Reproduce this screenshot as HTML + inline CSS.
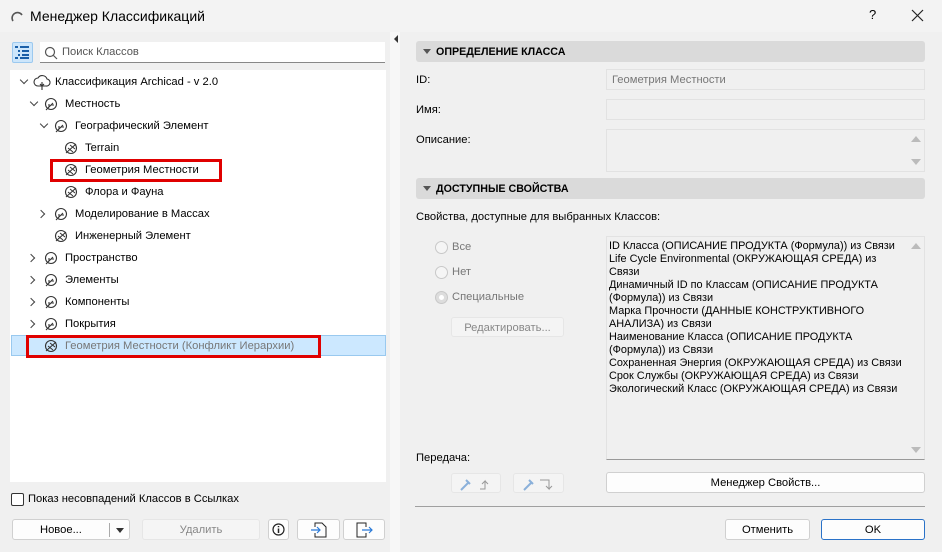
<!DOCTYPE html>
<html><head><meta charset="utf-8"><style>
*{box-sizing:border-box;margin:0;padding:0}
body{width:942px;height:552px;background:#f0f0f0;font-family:"Liberation Sans","DejaVu Sans",sans-serif;font-size:11.2px;color:#000;position:relative;overflow:hidden}
.a{position:absolute}
.t{white-space:nowrap}
.btn{position:absolute;background:#fdfdfd;border:1px solid #d0d0d0;border-radius:3px;text-align:center;line-height:21px}
.fld{position:absolute;background:#f0f0f0;border:1px solid #e2e2e2}
.hdr{position:absolute;left:416px;width:509px;height:21px;background:#dadada;border-radius:3px;font-weight:bold;font-size:10.7px;line-height:22px;padding-left:20px}
.hdr:before{content:"";position:absolute;left:7px;top:8px;border-left:4px solid transparent;border-right:4px solid transparent;border-top:5px solid #555}
.row{position:absolute;height:22px;line-height:23px;white-space:nowrap}
.chev{position:absolute;width:6px;height:6px;border-right:1.5px solid #444;border-bottom:1.5px solid #444}
.dn{transform:rotate(45deg)}
.rt{transform:rotate(-45deg)}
.radio{position:absolute;width:13px;height:13px;border:1px solid #c8c8c8;border-radius:50%;background:#f5f5f5}
.red{position:absolute;border:3px solid #e00000}
.sc{position:absolute;width:0;height:0;border-left:5px solid transparent;border-right:5px solid transparent}
</style></head><body>
<div class="a" style="left:0;top:0;width:942px;height:32px;background:#f3f3f3"></div>
<svg class="a" style="left:10px;top:9px" width="14" height="14"><path d="M3 12 A5 5 0 0 1 12 6" stroke="#555" stroke-width="1.6" fill="none"/></svg>
<div class="a t" style="left:30px;top:8px;font-size:14px">Менеджер Классификаций</div>
<div class="a t" style="left:869px;top:7px;font-size:13px">?</div>
<svg class="a" style="left:911px;top:9px" width="13" height="13"><path d="M1 1L12 12M12 1L1 12" stroke="#222" stroke-width="1.2"/></svg>
<div class="a" style="left:390px;top:32px;width:10px;height:520px;background:#f7f7f7"></div>
<div class="a" style="left:394px;top:35px;border-top:4px solid transparent;border-bottom:4px solid transparent;border-right:4px solid #333"></div>
<div class="a" style="left:12px;top:42px;width:21px;height:21px;background:#cde6fb;border:1px solid #9cc9ef;border-radius:2px"></div>
<svg class="a" style="left:15px;top:46px" width="15" height="13"><g fill="#1a5fa8"><rect x="0" y="0" width="3" height="2"/><rect x="5" y="0" width="9" height="2"/><rect x="3" y="4" width="2" height="2"/><rect x="7" y="4" width="7" height="2"/><rect x="3" y="8" width="2" height="2"/><rect x="7" y="8" width="7" height="2"/><rect x="0" y="11" width="3" height="2"/><rect x="5" y="11" width="9" height="2"/></g></svg>
<div class="a" style="left:40px;top:42px;width:345px;height:21px;background:#fff;border-bottom:1px solid #888"></div>
<svg class="a" style="left:44px;top:46px" width="14" height="14"><circle cx="6" cy="6" r="4.5" stroke="#555" fill="none" stroke-width="1.2"/><path d="M9.5 9.5L13 13" stroke="#555" stroke-width="1.2"/></svg>
<div class="a t" style="left:62px;top:46px;color:#555">Поиск Классов</div>
<div class="a" style="left:10px;top:70px;width:376px;height:412px;background:#fff"></div>
<div class="a" style="left:11px;top:335px;width:375px;height:21px;background:#cce8ff;border:1px solid #99c9ef"></div>

<svg width="0" height="0" style="position:absolute"><defs>
<g id="leaf"><circle cx="7" cy="7" r="5.5" stroke="#333" fill="none" stroke-width="1.1"/><path d="M2 13L9 6M5 10L5 7M7 8L10 8" stroke="#333" stroke-width="1.1" fill="none"/></g>
<g id="leaf2"><circle cx="7" cy="7" r="5.5" stroke="#333" fill="none" stroke-width="1.1"/><path d="M2 12L12 3M4 7L9 11M6 4L11 8" stroke="#333" stroke-width="1" fill="none"/></g>
</defs></svg>

<div class="chev dn" style="left:21px;top:77px"></div>
<svg class="a" style="left:33px;top:74px" width="18" height="17"><path d="M5 12a4 4 0 0 1 0-8a5 5 0 0 1 9 1a3.5 3.5 0 0 1-1 7z M9 8v8M7 10l2 2 2-2" stroke="#333" fill="none" stroke-width="1.1"/></svg>
<div class="row" style="left:55px;top:71px">Классификация Archicad - v 2.0</div>
<div class="chev dn" style="left:31px;top:99px"></div>
<svg class="a" style="left:44px;top:97px" width="15" height="15"><use href="#leaf"/></svg>
<div class="row" style="left:65px;top:93px">Местность</div>
<div class="chev dn" style="left:41px;top:121px"></div>
<svg class="a" style="left:54px;top:119px" width="15" height="15"><use href="#leaf"/></svg>
<div class="row" style="left:75px;top:115px">Географический Элемент</div>
<svg class="a" style="left:64px;top:141px" width="15" height="15"><use href="#leaf2"/></svg>
<div class="row" style="left:85px;top:137px">Terrain</div>
<svg class="a" style="left:64px;top:163px" width="15" height="15"><use href="#leaf2"/></svg>
<div class="row" style="left:85px;top:159px">Геометрия Местности</div>
<svg class="a" style="left:64px;top:185px" width="15" height="15"><use href="#leaf2"/></svg>
<div class="row" style="left:85px;top:181px">Флора и Фауна</div>
<div class="chev rt" style="left:38px;top:211px"></div>
<svg class="a" style="left:54px;top:207px" width="15" height="15"><use href="#leaf"/></svg>
<div class="row" style="left:75px;top:203px">Моделирование в Массах</div>
<svg class="a" style="left:54px;top:229px" width="15" height="15"><use href="#leaf2"/></svg>
<div class="row" style="left:75px;top:225px">Инженерный Элемент</div>
<div class="chev rt" style="left:28px;top:255px"></div>
<svg class="a" style="left:44px;top:251px" width="15" height="15"><use href="#leaf"/></svg>
<div class="row" style="left:65px;top:247px">Пространство</div>
<div class="chev rt" style="left:28px;top:277px"></div>
<svg class="a" style="left:44px;top:273px" width="15" height="15"><use href="#leaf"/></svg>
<div class="row" style="left:65px;top:269px">Элементы</div>
<div class="chev rt" style="left:28px;top:299px"></div>
<svg class="a" style="left:44px;top:295px" width="15" height="15"><use href="#leaf"/></svg>
<div class="row" style="left:65px;top:291px">Компоненты</div>
<div class="chev rt" style="left:28px;top:321px"></div>
<svg class="a" style="left:44px;top:317px" width="15" height="15"><use href="#leaf"/></svg>
<div class="row" style="left:65px;top:313px">Покрытия</div>
<svg class="a" style="left:44px;top:339px" width="15" height="15"><use href="#leaf2"/></svg>
<div class="row" style="left:65px;top:335px;color:#777">Геометрия Местности (Конфликт Иерархии)</div>
<div class="red" style="left:50px;top:159px;width:172px;height:23px"></div>
<div class="red" style="left:26px;top:335px;width:295px;height:23px"></div>

<div class="a" style="left:11px;top:493px;width:13px;height:13px;border:1px solid #333;border-radius:2px;background:#fff"></div>
<div class="a t" style="left:28px;top:493px">Показ несовпадений Классов в Ссылках</div>
<div class="btn" style="left:12px;top:519px;width:118px;height:21px"><span style="position:absolute;left:27px">Новое...</span><span style="position:absolute;left:96px;top:3px;width:1px;height:14px;background:#aaa"></span><span style="position:absolute;left:103px;top:8px;border-left:4px solid transparent;border-right:4px solid transparent;border-top:5px solid #333"></span></div>
<div class="btn" style="left:142px;top:519px;width:118px;height:21px;background:#f5f5f5;border-color:#e6e6e6;color:#888">Удалить</div>
<div class="btn" style="left:268px;top:519px;width:21px;height:21px"><svg style="margin-top:3px" width="13" height="13"><circle cx="6.5" cy="6.5" r="5.5" stroke="#222" fill="none" stroke-width="1.2"/><path d="M6.5 5.5v4.5M6.5 3v1.3" stroke="#222" stroke-width="1.5"/></svg></div>
<div class="btn" style="left:297px;top:519px;width:43px;height:21px"><svg style="margin-top:2px" width="18" height="16"><path d="M5 5V1h7l4 4v10H5v-4" stroke="#222" fill="none"/><path d="M1 8h9M7 5l3 3-3 3" stroke="#2a7ad8" fill="none" stroke-width="1.2"/></svg></div>
<div class="btn" style="left:343px;top:519px;width:42px;height:21px"><svg style="margin-top:2px" width="20" height="16"><path d="M12 5V1H3v14h9v-4" stroke="#222" fill="none"/><path d="M8 8h10M15 5l3 3-3 3" stroke="#2a7ad8" fill="none" stroke-width="1.2"/></svg></div>

<div class="hdr" style="top:41px">ОПРЕДЕЛЕНИЕ КЛАССА</div>
<div class="a t" style="left:416px;top:74px">ID:</div>
<div class="fld t" style="left:606px;top:69px;width:319px;height:21px;color:#777;padding:4px 0 0 5px">Геометрия Местности</div>
<div class="a t" style="left:416px;top:104px">Имя:</div>
<div class="fld" style="left:606px;top:99px;width:319px;height:21px"></div>
<div class="a t" style="left:416px;top:134px">Описание:</div>
<div class="fld" style="left:606px;top:129px;width:319px;height:43px"></div>
<div class="sc" style="left:911px;top:136px;border-bottom:6px solid #bbb"></div>
<div class="sc" style="left:911px;top:159px;border-top:6px solid #bbb"></div>
<div class="hdr" style="top:178px">ДОСТУПНЫЕ СВОЙСТВА</div>
<div class="a t" style="left:416px;top:211px">Свойства, доступные для выбранных Классов:</div>
<div class="radio" style="left:435px;top:241px"></div><div class="a t" style="left:452px;top:241px;color:#777">Все</div>
<div class="radio" style="left:435px;top:266px"></div><div class="a t" style="left:452px;top:266px;color:#777">Нет</div>
<div class="radio" style="left:435px;top:291px;background:#ddd"><div style="position:absolute;left:3px;top:3px;width:5px;height:5px;border-radius:50%;background:#fff"></div></div><div class="a t" style="left:452px;top:291px;color:#777">Специальные</div>
<div class="btn" style="left:451px;top:317px;width:113px;height:20px;background:#f4f4f4;border-color:#e6e6e6;color:#888;line-height:20px">Редактировать...</div>
<div class="fld" style="left:606px;top:236px;width:319px;height:224px;border-bottom:1px solid #999"></div>
<div class="sc" style="left:911px;top:243px;border-bottom:6px solid #bbb"></div>
<div class="sc" style="left:911px;top:447px;border-top:6px solid #bbb"></div>
<div class="a t" style="left:609px;top:240px;line-height:13px;font-size:10.9px">ID Класса (ОПИСАНИЕ ПРОДУКТА (Формула)) из Связи<br>Life Cycle Environmental (ОКРУЖАЮЩАЯ СРЕДА) из<br>Связи<br>Динамичный ID по Классам (ОПИСАНИЕ ПРОДУКТА<br>(Формула)) из Связи<br>Марка Прочности (ДАННЫЕ КОНСТРУКТИВНОГО<br>АНАЛИЗА) из Связи<br>Наименование Класса (ОПИСАНИЕ ПРОДУКТА<br>(Формула)) из Связи<br>Сохраненная Энергия (ОКРУЖАЮЩАЯ СРЕДА) из Связи<br>Срок Службы (ОКРУЖАЮЩАЯ СРЕДА) из Связи<br>Экологический Класс (ОКРУЖАЮЩАЯ СРЕДА) из Связи</div>
<div class="a t" style="left:416px;top:452px">Передача:</div>
<div class="btn" style="left:451px;top:473px;width:50px;height:20px;background:#f4f4f4;border-color:#e6e6e6"><svg style="margin-top:2px" width="36" height="16"><path d="M3 14l8-8M8 4l4 4" stroke="#8ab0da" stroke-width="2"/><path d="M22 13h5v-8l-3 3M27 5l3 3" stroke="#999" fill="none"/></svg></div>
<div class="btn" style="left:513px;top:473px;width:51px;height:20px;background:#f4f4f4;border-color:#e6e6e6"><svg style="margin-top:2px" width="36" height="16"><path d="M3 14l8-8M8 4l4 4" stroke="#8ab0da" stroke-width="2"/><path d="M19 4h9v9l-3-3M28 13l3-3" stroke="#999" fill="none"/></svg></div>
<div class="btn" style="left:606px;top:472px;width:319px;height:21px">Менеджер Свойств...</div>
<div class="a" style="left:415px;top:506px;width:510px;height:1px;background:#a0a0a0"></div>
<div class="btn" style="left:725px;top:519px;width:85px;height:21px">Отменить</div>
<div class="btn" style="left:821px;top:519px;width:104px;height:21px;border:1px solid #2a72c8">OK</div>
</body></html>
